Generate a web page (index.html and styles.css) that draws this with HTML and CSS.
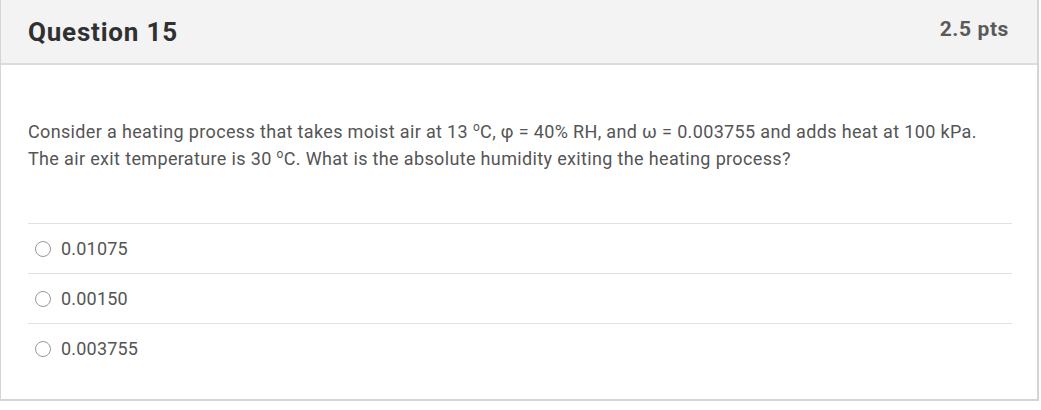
FILE: index.html
```html
<!DOCTYPE html>
<html>
<head>
<meta charset="utf-8">
<link rel="stylesheet" href="styles.css">
</head>
<body>
<div class="question">
  <div class="header">
    <h2 class="title">Question 15</h2>
    <span class="points">2.5 pts</span>
  </div>
  <div class="body">
    <p class="text">Consider a heating process that takes moist air at 13 <sup>o</sup>C, φ = 40% RH, and ω = 0.003755 and adds heat at 100 kPa. The air exit temperature is 30 <sup>o</sup>C. What is the absolute humidity exiting the heating process?</p>
    <div class="answers">
      <label class="answer"><span class="radio"></span><span class="label">0.01075</span></label>
      <label class="answer"><span class="radio"></span><span class="label">0.00150</span></label>
      <label class="answer"><span class="radio"></span><span class="label">0.003755</span></label>
    </div>
  </div>
</div>
</body>
</html>
```
FILE: styles.css
```css
html, body {
  margin: 0;
  padding: 0;
  background: #fff;
}
body {
  font-family: Roboto, "Liberation Sans", sans-serif;
  color: #333;
}
.question {
  width: 1036px;
  border: 1px solid #d5d5d5;
  border-top: none;
  border-bottom-width: 2px;
  border-right-width: 2px;
  box-sizing: content-box;
  height: 399px;
}
.header {
  display: flex;
  align-items: center;
  justify-content: space-between;
  height: 63px;
  background: #f3f3f3;
  border-bottom: 2px solid #dcdcdc;
  padding: 0 28px 0 27px;
}
.title {
  margin: 0;
  font-size: 26px;
  font-weight: bold;
  letter-spacing: 0.8px;
  color: #303030;
}
.points {
  font-size: 21px;
  font-weight: bold;
  letter-spacing: 0.6px;
  color: #5a5a5a;
  margin-top: -5px;
}
.body {
  padding: 53px 27px 0 27px;
}
.text {
  margin: 0;
  font-size: 18px;
  line-height: 27px;
  letter-spacing: 0.35px;
  color: #555;
  width: 960px;
}
.text sup {
  font-size: 12px;
  vertical-align: 7px;
  line-height: 0;
}
.answers {
  margin-top: 51px;
  width: 984px;
}
.answer {
  display: flex;
  align-items: center;
  gap: 10px;
  height: 49px;
  border-top: 1px solid #e2e2e2;
  padding-left: 7px;
  font-size: 18px;
  letter-spacing: 0.2px;
  color: #555;
}
.radio {
  width: 14px;
  height: 14px;
  border: 1px solid #999;
  border-radius: 50%;
  background: #fff;
}
```
